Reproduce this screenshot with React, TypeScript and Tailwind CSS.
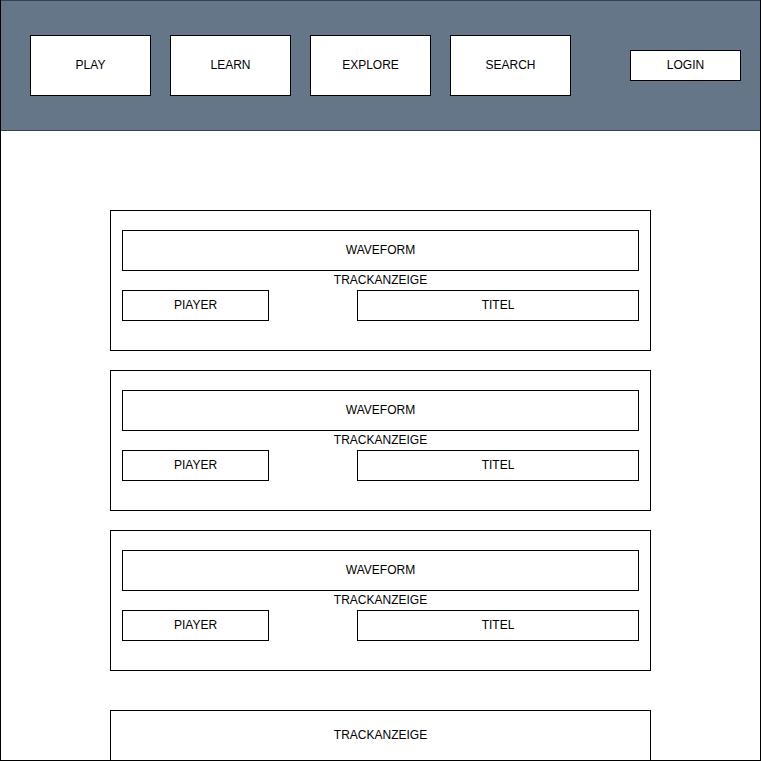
const navItems = ["PLAY", "LEARN", "EXPLORE", "SEARCH"]

function TrackCard() {
  return (
    <div className="w-[541px] h-[141px] shrink-0 border border-black bg-white pt-[19px] px-[11px] flex flex-col">
      <div className="h-[41px] pb-px border border-black flex items-center justify-center">WAVEFORM</div>
      <div className="h-[19px] pb-px flex items-center justify-center">TRACKANZEIGE</div>
      <div className="flex justify-between">
        <div className="w-[147px] h-[31px] pb-px border border-black flex items-center justify-center">PIAYER</div>
        <div className="w-[282px] h-[31px] pb-px border border-black flex items-center justify-center">TITEL</div>
      </div>
    </div>
  )
}

export default function App() {
  return (
    <div
      className="w-[761px] h-[761px] overflow-hidden bg-white border-x border-b border-black flex flex-col text-[12px] text-black"
      style={{ fontFamily: '"Liberation Sans", Arial, sans-serif' }}
    >
      {/* Header */}
      <div className="-mx-px h-[131px] shrink-0 border border-[#314354] bg-[#647687] pl-[29px] pt-[34px] flex items-start">
        <div className="flex gap-[19px]">
          {navItems.map((item) => (
            <div key={item} className="w-[121px] h-[61px] pb-px border border-black bg-white flex items-center justify-center">
              {item}
            </div>
          ))}
        </div>
        <div className="ml-[59px] mt-[15px] w-[111px] h-[31px] pb-px border border-black bg-white flex items-center justify-center">
          LOGIN
        </div>
      </div>

      {/* Tracks */}
      <div className="flex flex-col pl-[109px] pt-[79px] gap-[19px]">
        <TrackCard />
        <TrackCard />
        <TrackCard />
        <div className="mt-[20px] w-[541px] h-[51px] pb-px shrink-0 border border-black bg-white flex items-center justify-center">
          TRACKANZEIGE
        </div>
      </div>
    </div>
  )
}
